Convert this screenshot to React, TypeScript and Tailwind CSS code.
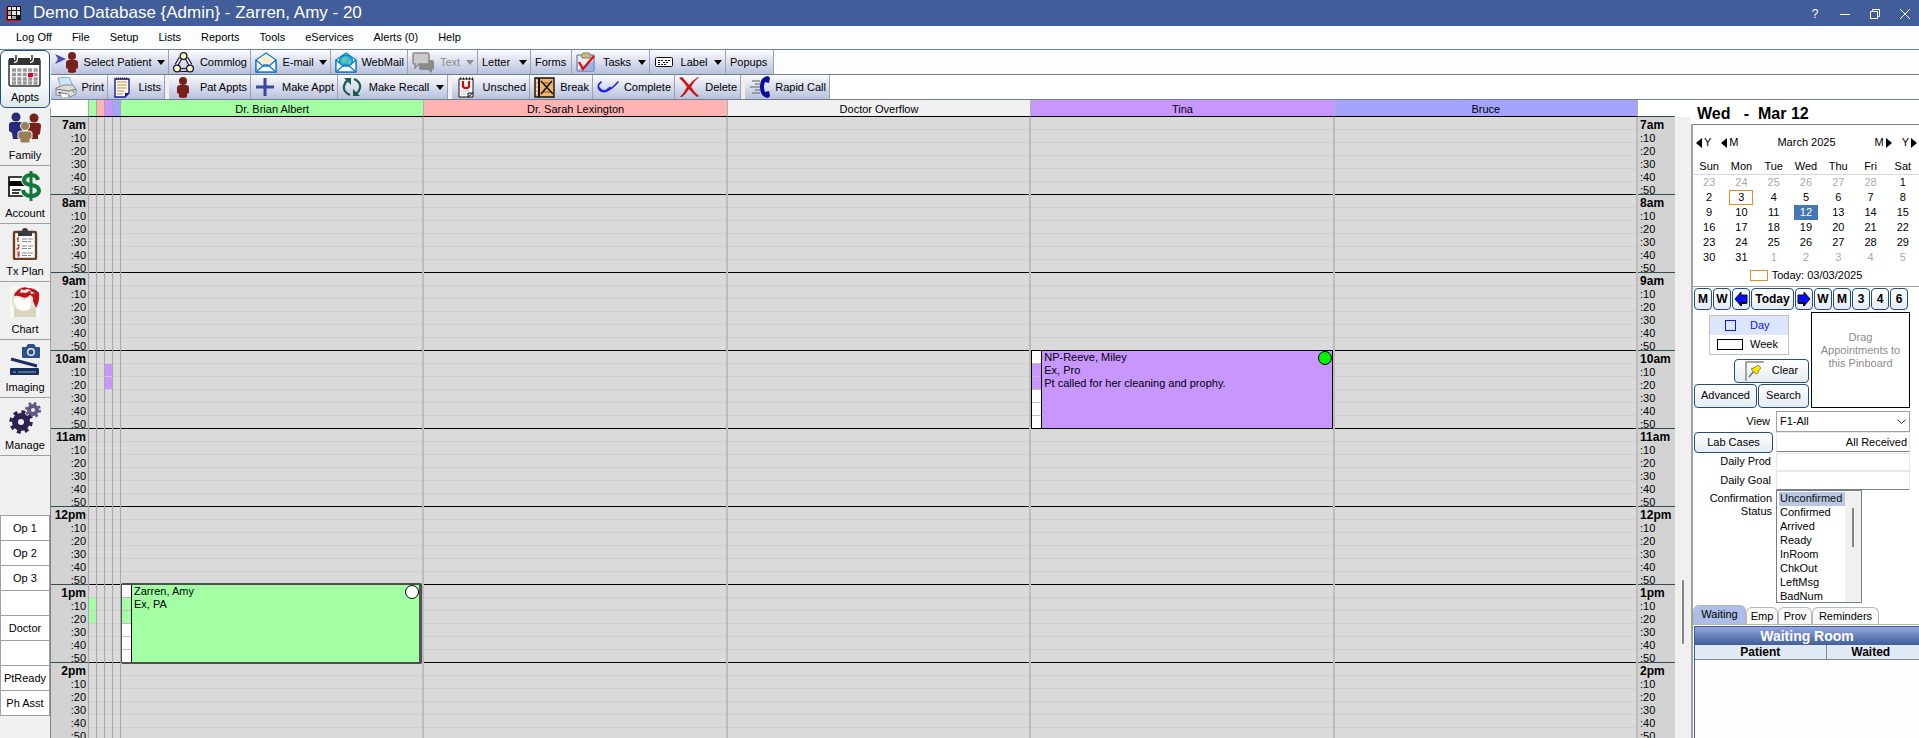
import type { ReactNode } from "react";

const menus = ["Log Off", "File", "Setup", "Lists", "Reports", "Tools", "eServices", "Alerts (0)", "Help"];

const hours = ["7am", "8am", "9am", "10am", "11am", "12pm", "1pm", "2pm"];
const minutes = [":10", ":20", ":30", ":40", ":50"];

const weeks = [
  [23, 24, 25, 26, 27, 28, 1],
  [2, 3, 4, 5, 6, 7, 8],
  [9, 10, 11, 12, 13, 14, 15],
  [16, 17, 18, 19, 20, 21, 22],
  [23, 24, 25, 26, 27, 28, 29],
  [30, 31, 1, 2, 3, 4, 5],
];

const statuses = ["Unconfirmed", "Confirmed", "Arrived", "Ready", "InRoom", "ChkOut", "LeftMsg", "BadNum"];

function PersonIcon() {
  return (
    <svg width="12" height="21" viewBox="0 0 12 21" fill="#78201c">
      <circle cx="6" cy="4" r="4" />
      <path d="M0 11q0-3 3-3h6q3 0 3 3v5l-2 1v3q-4 2-8 0v-3l-2-1z" />
    </svg>
  );
}

function SelectPatientIcon() {
  return (
    <svg width="23" height="21" viewBox="0 0 23 21">
      <path d="M0 2l11 5-11 5 3-5z" fill="#4b4bb0" />
      <circle cx="17" cy="4" r="4" fill="#78201c" />
      <path d="M11 11q0-3 3-3h6q3 0 3 3v5l-2 1v3q-4 2-8 0v-3l-2-1z" fill="#78201c" />
    </svg>
  );
}

function CommlogIcon() {
  return (
    <svg width="21" height="21" viewBox="0 0 21 21" fill="none" stroke="#14143c" strokeWidth="1.3">
      <path d="M7.500 6L3.500 13M13.500 6l4 7M7 18h7" strokeWidth="4" />
      <path d="M7.500 6L3.500 13M13.500 6l4 7M7 18h7" stroke="#fff" strokeWidth="1.600" />
      <circle cx="10.500" cy="4" r="3.400" fill="#ffffb0" />
      <circle cx="4" cy="16.500" r="3.400" fill="#ffffb0" />
      <circle cx="17" cy="16.500" r="3.400" fill="#ffffb0" />
    </svg>
  );
}

function MailIcon({ globe }: { globe?: boolean }) {
  return (
    <svg width="22" height="21" viewBox="0 0 22 21" stroke="#1580cc" strokeWidth="1.400" strokeLinejoin="round">
      <path d="M1 8l10-7 10 7v12H1z" fill="#fff" />
      <path d="M4 8l7-5 7 5v2l-7 5-7-5z" fill="#ffebcb" stroke="none" />
      {globe && <circle cx="11" cy="9.500" r="6.500" fill="#35b6d8" stroke="#1580cc" />}
      {globe && <path d="M7 6l4-1 1 3-3 3-3-2zM13 10l3-2v3l-3 2z" fill="#5fce9c" stroke="none" />}
      <path d="M1 8v12h20V8l-7 6H8z" fill="#fff" />
      <path d="M1 20l8-7h4l8 7" fill="none" />
    </svg>
  );
}

function ChatIcon() {
  return (
    <svg width="22" height="21" viewBox="0 0 22 21">
      <path d="M7 8h13q2 0 2 2v6q0 2-2 2v3l-4-3H9q-2 0-2-2z" fill="#8b8b8b" />
      <path d="M2 1h13q2 0 2 2v7q0 2-2 2H7l-4 4v-4H2q-1 0-1-2V3q0-2 1-2z" fill="#cacaca" stroke="#8b8b8b" strokeWidth="1.500" />
    </svg>
  );
}

function TasksIcon() {
  return (
    <svg width="20" height="20" viewBox="0 0 20 20">
      <path d="M1 3h17v16H1z" fill="#e8eefa" stroke="#5566a8" />
      <path d="M2 18h16V8z" fill="#7f9ae0" opacity=".7" />
      <path d="M5 4l2-3h6l2 3-1 2H6z" fill="#c9bc84" stroke="#8b8050" />
      <path d="M3 10l4 7L18 4" fill="none" stroke="#e01010" strokeWidth="2.400" />
    </svg>
  );
}

function LabelIcon() {
  return (
    <svg width="19" height="11" viewBox="0 0 19 11" fill="none" stroke="#111">
      <rect x=".5" y=".5" width="17" height="9" rx="1" fill="#fff" />
      <path d="M3 3.500h5M10 3.500h5M3 5.500h3M8 5.500h6M3 7.500h9" strokeDasharray="2 1" />
    </svg>
  );
}

function PrintIcon() {
  return (
    <svg width="22" height="21" viewBox="0 0 22 21">
      <path d="M3 1l11-1 4 9-12 2z" fill="#cfe4fa" stroke="#8ba4c4" />
      <path d="M1 11l8-3h9l3 4v5l-6 3-14-2z" fill="#dcdcdc" stroke="#888" />
      <path d="M1 12l13 2 7-2" fill="none" stroke="#777" />
      <path d="M3 15l9 1.500 3 2-8 1z" fill="#222" />
      <path d="M5 16l8 1 1 3-7 1z" fill="#fff" stroke="#999" strokeWidth=".6" />
      <circle cx="18.500" cy="14.500" r="1" fill="#5a5" />
    </svg>
  );
}

function ListsIcon() {
  return (
    <svg width="16" height="21" viewBox="0 0 16 21">
      <path d="M1 2h14v14l-4 4H1z" fill="#fff" stroke="#1818a0" strokeWidth="1.400" />
      <path d="M2 1.500h12" stroke="#222" strokeWidth="2" strokeDasharray="1 1" />
      <path d="M3 5h10M3 8h10M3 11h10M3 14h7M3 17h6" stroke="#d9b16c" strokeWidth="1.400" />
      <path d="M15 16h-4v4z" fill="#1010a0" />
    </svg>
  );
}

function RecallIcon() {
  return (
    <svg width="20" height="20" viewBox="0 0 20 20">
      <path d="M8 18Q1 15 2 9q1-4 4-6" fill="none" stroke="#1d5c4c" strokeWidth="2.200" />
      <path d="M2 1h7v7z" fill="#1d5c4c" />
      <path d="M12 2q7 3 6 9-1 4-4 6" fill="none" stroke="#1d5c4c" strokeWidth="2.200" />
      <path d="M18 19h-7v-7z" fill="#1d5c4c" />
    </svg>
  );
}

function UnschedIcon() {
  return (
    <svg width="16" height="21" viewBox="0 0 16 21">
      <path d="M1 2h14v18H1z" fill="#fff" stroke="#111" />
      <path d="M2 1.500h13" stroke="#111" strokeWidth="2" strokeDasharray="1 2" />
      <path d="M5 4v5q0 2 3 2t3-2V4" fill="none" stroke="#e00000" strokeWidth="2.200" />
      <path d="M3 14h8M3 17h5" stroke="#bbb" />
      <path d="M10 20v-4h5z" fill="#ddd" stroke="#111" />
    </svg>
  );
}

function BreakIcon() {
  return (
    <svg width="21" height="21" viewBox="0 0 21 21" stroke="#111">
      <path d="M1 1h19v19H1z" fill="#eeb46a" strokeWidth="1.400" />
      <path d="M5 1v19" strokeWidth="2" />
      <path d="M2 4h2M2 8h2M2 12h2M2 16h2" stroke="#fff" />
      <path d="M9 6h8M9 15h8" stroke="#8a5b22" />
      <path d="M7 4l12 13M18 4L7 17" strokeWidth="1.500" />
    </svg>
  );
}

function CompleteIcon() {
  return (
    <svg width="22" height="12" viewBox="0 0 22 12" fill="none" stroke="#2424f4" strokeLinecap="round">
      <path d="M4 1Q0 4 2 8q2 3 7 2Q14 9 21 1" strokeWidth="1.600" />
      <path d="M2 7q2 4 7 3l4-3" strokeWidth="2.400" />
    </svg>
  );
}

function DeleteIcon() {
  return (
    <svg width="20" height="20" viewBox="0 0 20 20" fill="#cc1212">
      <path d="M0 1l3-1q4 4 7 8 4-5 9-8h1q-5 4-8 10 3 5 8 9l-2 1q-5-4-8-8-3 5-7 8H1q4-4 7-10Q5 5 0 1z" />
    </svg>
  );
}

function RapidIcon() {
  return (
    <svg width="21" height="22" viewBox="0 0 21 22">
      <path d="M3 5h8M6 8h5M1 11h10M6 14h5M3 17h8" stroke="#888" strokeWidth="1.300" />
      <path d="M19 0q-8 1-8 11t8 11l2-2-1-5-4 1q-2-5 0-10l4 1 1-5z" fill="#0b0ba0" />
    </svg>
  );
}

function Caret() {
  return (
    <svg width="8" height="5" viewBox="0 0 8 5" fill="currentColor">
      <path d="M0 0h8L4 5z" />
    </svg>
  );
}

type ToolProps = { label: string; width: string; icon?: ReactNode; caret?: boolean; disabled?: boolean };

function ToolButton({ label, width, icon, caret, disabled }: ToolProps) {
  return (
    <button
      disabled={disabled}
      className={`flex shrink-0 items-center justify-between border-r border-[#a0a0a8] bg-linear-to-b from-[#fcfcff] to-[#b8c1dd] pr-[3px] pl-1 whitespace-nowrap disabled:text-[#8c8c8c] ${width}`}
    >
      {icon && <span className="flex min-w-5 justify-center">{icon}</span>}
      <span>{label}</span>
      {caret && <Caret />}
    </button>
  );
}

function Toolbars() {
  return (
    <>
      <div className="flex h-[25px] border-b border-[#708090] bg-[#fcfdfe]">
        <ToolButton label="Select Patient" width="w-[118px]" icon={<SelectPatientIcon />} caret />
        <ToolButton label="Commlog" width="w-[82px]" icon={<CommlogIcon />} />
        <ToolButton label="E-mail" width="w-20" icon={<MailIcon />} caret />
        <ToolButton label="WebMail" width="w-[77px]" icon={<MailIcon globe />} />
        <ToolButton label="Text" width="w-[70px]" icon={<ChatIcon />} caret disabled />
        <ToolButton label="Letter" width="w-[53px]" caret />
        <ToolButton label="Forms" width="w-[41px]" />
        <ToolButton label="Tasks" width="w-[78px]" icon={<TasksIcon />} caret />
        <ToolButton label="Label" width="w-[76px]" icon={<LabelIcon />} caret />
        <ToolButton label="Popups" width="w-12" />
      </div>
      <div className="flex h-[25px] border-b border-[#708090] bg-white">
        <ToolButton label="Print" width="w-[57px]" icon={<PrintIcon />} />
        <ToolButton label="Lists" width="w-[57px]" icon={<ListsIcon />} />
        <span className="w-1 bg-[#f0f0f0]" />
        <ToolButton label="Pat Appts" width="w-[82px]" icon={<PersonIcon />} />
        <ToolButton
          label="Make Appt"
          width="w-[87px]"
          icon={
            <svg width="18" height="18" viewBox="0 0 18 18" stroke="#3a459c" strokeWidth="3">
              <path d="M9 0v18M0 9h18" />
            </svg>
          }
        />
        <ToolButton label="Make Recall" width="w-[110px]" icon={<RecallIcon />} caret />
        <span className="w-1 bg-[#f0f0f0]" />
        <ToolButton label="Unsched" width="w-[78px]" icon={<UnschedIcon />} />
        <ToolButton label="Break" width="w-[63px]" icon={<BreakIcon />} />
        <ToolButton label="Complete" width="w-[82px]" icon={<CompleteIcon />} />
        <ToolButton label="Delete" width="w-[66px]" icon={<DeleteIcon />} />
        <span className="w-1 bg-[#f0f0f0]" />
        <ToolButton label="Rapid Call" width="w-[85px]" icon={<RapidIcon />} />
      </div>
    </>
  );
}

function ApptsIcon() {
  return (
    <svg width="34" height="32" viewBox="0 0 34 32">
      <rect x="1" y="4" width="31" height="27" rx="2" fill="#fff" stroke="#333" strokeWidth="1.500" />
      <path d="M1 3h31v7H1z" fill="#333" />
      <path d="M8 0v4q0 2-2 2M24 0v4q0 2-2 2" fill="none" stroke="#fff" strokeWidth="4" />
      <path d="M8 0v4q0 2-2 2M24 0v4q0 2-2 2" fill="none" stroke="#333" strokeWidth="1.500" />
      <path d="M4 15h26M4 19.500h26M4 24h26M4 28h26" stroke="#999" strokeWidth="3.400" strokeDasharray="4 1.400" />
      <path d="M20 18h5v4h-5z" fill="#d8002c" />
    </svg>
  );
}

function FamilyIcon() {
  return (
    <svg width="32" height="32" viewBox="0 0 32 32">
      <circle cx="7" cy="5" r="4.500" fill="#272a78" />
      <path d="M0 13q0-3 3-3h8q3 0 3 3l-2 14H4l-1-6-3-2z" fill="#272a78" />
      <circle cx="25" cy="6" r="4.500" fill="#78201c" />
      <path d="M18 14q0-3 3-3h8q3 0 3 3l-1 8-2 1v4h-8z" fill="#78201c" />
      <circle cx="16" cy="14" r="4.500" fill="#978154" stroke="#f0f0f0" />
      <path d="M9 21q0-2 3-2h8q3 0 3 2v5l-2 1v4H11v-4l-2-1z" fill="#978154" stroke="#f0f0f0" />
    </svg>
  );
}

function AccountIcon() {
  return (
    <svg width="34" height="32" viewBox="0 0 34 32">
      <path d="M1 7h20v19H1z" fill="#fff" stroke="#000" strokeWidth="1.600" />
      <path d="M1 11h20v5H1z" />
      <path d="M4 20h9M4 23h7" stroke="#000" strokeWidth="1.500" />
      <g fill="none">
        <path d="M30 10q-1-5-7-5t-7 5q0 4 7 5 8 1 8 6-1 5-8 5-7 0-8-6M23 1v30" stroke="#f0f0f0" strokeWidth="6" />
        <path d="M30 10q-1-5-7-5t-7 5q0 4 7 5 8 1 8 6-1 5-8 5-7 0-8-6" stroke="#13763a" strokeWidth="4" />
        <path d="M23 1v30" stroke="#13763a" strokeWidth="3" />
      </g>
    </svg>
  );
}

function TxPlanIcon() {
  return (
    <svg width="26" height="32" viewBox="0 0 26 32">
      <rect x="2" y="4" width="22" height="27" rx="1" fill="#fff" stroke="#68402a" strokeWidth="2.400" />
      <path d="M6 3h4q0-3 3-3t3 3h4v5H6z" fill="#3a3a3a" />
      <path d="M10 11h12M10 13.500h9M10 18h12M10 20.500h9M10 25h12M10 27.500h9" stroke="#888" strokeDasharray="5 1" />
      <path d="M5 11l1-1v4M5 17h2v2l-2 2h2M5 24h2v4H5M5 26h2" fill="none" stroke="#d81818" strokeWidth="1.200" />
    </svg>
  );
}

function ToothIcon() {
  return (
    <svg width="30" height="31" viewBox="0 0 30 31">
      <path d="M0 0h30v31H0z" fill="#f8f8f8" />
      <path d="M3 8Q0 16 4 22v9h22v-9q4-8 3-15-4-4-9-5-4 1-7-1-7 1-10 7z" fill="#e4e1d6" />
      <path d="M8 4q5-4 10-2 7 0 11 5 1 8-3 15l-3-7q1-5-3-6-4 4-8 2-5-2-8-1 1-4 4-6z" fill="#c0121a" />
      <path d="M11 3q3 2 6 0l4 1-5 3q-4-1-6 0zM20 5l5 2-4 1z" fill="#f4eeee" />
      <path d="M4 12q4-2 7 1 4 3 8-1 3 1 2 6-1 5-4 7-5 2-9-2-4-4-4-11z" fill="#fdfdfb" />
      <path d="M4 22q10 6 22-1v10H4z" fill="#dcd5bd" />
    </svg>
  );
}

function ImagingIcon() {
  return (
    <svg width="32" height="32" viewBox="0 0 32 32">
      <path d="M13 3h4l2-3h6l2 3h3q1 0 1 1v9q0 1-1 1H14q-1 0-1-1z" fill="#2e5188" />
      <circle cx="22" cy="8" r="4" fill="#f0f0f0" />
      <circle cx="22" cy="8" r="2.600" fill="#2e5188" />
      <path d="M2 15l26 7" stroke="#16305f" strokeWidth="3" />
      <rect x="1" y="24" width="29" height="7" rx="1" fill="#16305f" />
      <path d="M4 28h3M9 28h18" stroke="#8fa6cc" strokeWidth="1.200" />
    </svg>
  );
}

function ManageIcon() {
  return (
    <svg width="32" height="32" viewBox="0 0 32 32" fill="none">
      <circle cx="24" cy="8" r="4" stroke="#605a88" strokeWidth="4" />
      <circle cx="24" cy="8" r="6.500" stroke="#605a88" strokeWidth="3" strokeDasharray="2.550 2.550" />
      <circle cx="12" cy="20" r="6" stroke="#30204f" strokeWidth="6" />
      <circle cx="12" cy="20" r="10" stroke="#30204f" strokeWidth="3.500" strokeDasharray="3.930 3.930" />
    </svg>
  );
}

const modules = [
  { label: "Family", icon: <FamilyIcon /> },
  { label: "Account", icon: <AccountIcon /> },
  { label: "Tx Plan", icon: <TxPlanIcon /> },
  { label: "Chart", icon: <ToothIcon /> },
  { label: "Imaging", icon: <ImagingIcon /> },
  { label: "Manage", icon: <ManageIcon /> },
];

function Sidebar() {
  return (
    <nav className="flex w-[51px] shrink-0 flex-col bg-[#f0f0f0]">
      <button className="flex h-[58px] w-[50px] flex-col items-center justify-between rounded-md border border-[#1f4f82] bg-linear-to-b from-white via-white to-[#dfe8ee] pt-1 pb-0.5">
        <ApptsIcon />
        <span className="leading-4">Appts</span>
      </button>
      {modules.map((m) => (
        <button
          key={m.label}
          className="flex h-[58px] flex-col items-center justify-between border-r border-b border-[#a0a0a0] pt-1 pb-0.5"
        >
          {m.icon}
          <span className="leading-4">{m.label}</span>
        </button>
      ))}
      <div className="flex flex-1 flex-col border-r border-[#808080] pt-[59px]">
        {["Op 1", "Op 2", "Op 3", "", "Doctor", "", "PtReady", "Ph Asst"].map((name, i) => (
          <div
            key={i}
            className="flex h-[25px] items-center justify-center border border-b-0 border-[#a0a0a0] bg-white last:h-[26px] last:border-b"
          >
            {name}
          </div>
        ))}
      </div>
    </nav>
  );
}

function TimeColumn({ side }: { side: "left" | "right" }) {
  return (
    <div className="w-[37px] shrink-0 bg-[#d3d3d3] leading-[13px]">
      {hours.map((h) => (
        <div key={h} className={`h-[78px] border-b border-[#2f4f4f] px-0.5 pt-px ${side === "left" ? "text-right" : "text-left"}`}>
          <div className="text-xs leading-[14px] font-bold">{h}</div>
          {minutes.map((m) => (
            <div key={m}>{m}</div>
          ))}
        </div>
      ))}
    </div>
  );
}

// slots are ten minute steps counted from 7am
function Slots({ filled = [], fill = "" }: { filled?: number[]; fill?: string }) {
  return (
    <>
      {hours.map((h, i) => (
        <div key={h} className="h-[78px] border-b border-black">
          {[0, 1, 2, 3, 4, 5].map((s) => (
            <div
              key={s}
              className={`h-[13px] ${s < 5 ? "border-b border-[#cfcfcf]" : ""} ${filled.includes(i * 6 + s) ? fill : ""}`}
            />
          ))}
        </div>
      ))}
    </>
  );
}

type ApptProps = { lines: string[]; place: string; fill: string; dot: string };

function Appointment({ lines, place, fill, dot }: ApptProps) {
  return (
    <div className={`absolute flex overflow-hidden ${place} ${fill}`}>
      <div className="w-[10px] border-r border-black bg-white">
        {[0, 1, 2, 3, 4, 5].map((s) => (
          <div key={s} className={`h-[13px] border-b border-[#c0c0c0] ${s === 1 || s === 2 ? fill : ""}`} />
        ))}
      </div>
      <div className="flex-1 pl-0.5 leading-[13px]">
        {lines.map((l) => (
          <p key={l}>{l}</p>
        ))}
      </div>
      <span className={`size-[14px] rounded-full border border-black ${dot}`} />
    </div>
  );
}

const operatories = [
  { name: "Dr. Brian Albert", color: "bg-[#a4ffa4]" },
  { name: "Dr. Sarah Lexington", color: "bg-[#ffb4b4]" },
  { name: "Doctor Overflow", color: "bg-[#f0f0f0]" },
  { name: "Tina", color: "bg-[#c896ff]" },
  { name: "Bruce", color: "bg-[#a4a4ff]" },
];

const providers = [
  { color: "bg-[#a4ffa4]", filled: [37, 38] },
  { color: "bg-[#ffb4b4]", filled: [] },
  { color: "bg-[#c896ff]", filled: [19, 20] },
  { color: "bg-[#a4a4ff]", filled: [] },
];

function Schedule() {
  return (
    <section className="flex min-w-0 flex-1 flex-col">
      <div className="flex h-[17px] shrink-0 bg-white">
        <div className="w-[37px] border-b border-[#2f4f4f]" />
        <div className="flex border-b border-l border-b-black border-l-[#a9a9a9]">
          {providers.map((p) => (
            <div key={p.color} className={`w-2 border-r border-[#a9a9a9] ${p.color}`} />
          ))}
        </div>
        {operatories.map((o) => (
          <div key={o.name} className={`flex-1 border-r border-b border-r-[#b0b0b0] border-b-black pt-px text-center leading-4 ${o.color}`}>
            {o.name}
          </div>
        ))}
        <div className="mr-4 w-[37px] border-b border-[#2f4f4f]" />
      </div>
      <div className="flex min-h-0 flex-1 overflow-hidden bg-[#dadada]">
        <TimeColumn side="left" />
        <div className="flex border-l border-[#a9a9a9]">
          {providers.map((p) => (
            <div key={p.color} className="w-2 border-r border-[#a9a9a9]">
              <Slots filled={p.filled} fill={p.color} />
            </div>
          ))}
        </div>
        {operatories.map((o) => (
          <div key={o.name} className="relative flex-1 border-r-2 border-[#bcbcbc]">
            <Slots />
            {o.name === "Dr. Brian Albert" && (
              <Appointment
                lines={["Zarren, Amy", "Ex, PA"]}
                place="top-[466px] right-0 left-0 h-[81px] rounded-xs border-2 border-r-3 border-l-1 border-[#505050]"
                fill="bg-[#a4ffa4]"
                dot="bg-white"
              />
            )}
            {o.name === "Tina" && (
              <Appointment
                lines={["NP-Reeve, Miley", "Ex, Pro", "Pt called for her cleaning and prophy."]}
                place="top-[233px] right-0 left-0 h-[79px] border border-black"
                fill="bg-[#c896ff]"
                dot="bg-[#00f400]"
              />
            )}
          </div>
        ))}
        <TimeColumn side="right" />
        <div className="flex w-4 shrink-0 items-center justify-center bg-[#f0f0f0] pt-[368px]">
          <div className="h-16 w-0.5 rounded bg-[#858585]" />
        </div>
      </div>
    </section>
  );
}

function NavArrow({ flip }: { flip?: boolean }) {
  return (
    <svg width="6" height="10" viewBox="0 0 6 10">
      <path d={flip ? "M0 0l6 5-6 5z" : "M6 0L0 5l6 5z"} />
    </svg>
  );
}

function Calendar() {
  return (
    <div className="flex flex-col border-y border-t-[#808080] border-b-[#a0a0a0] bg-white">
      <div className="flex h-[35px] items-center justify-between pr-0.5 pl-[3px]">
        <div className="flex gap-2.5">
          <button className="flex items-center gap-0.5"><NavArrow />Y</button>
          <button className="flex items-center gap-0.5"><NavArrow />M</button>
        </div>
        <span>March 2025</span>
        <div className="flex gap-2.5">
          <button className="flex items-center gap-0.5">M<NavArrow flip /></button>
          <button className="flex items-center gap-0.5">Y<NavArrow flip /></button>
        </div>
      </div>
      <table className="w-full table-fixed text-center">
        <thead>
          <tr className="border-b border-[#d8d8d8]">
            {["Sun", "Mon", "Tue", "Wed", "Thu", "Fri", "Sat"].map((d) => (
              <th key={d} className="h-[14px] p-0 leading-[13px] font-normal">{d}</th>
            ))}
          </tr>
        </thead>
        <tbody>
          {weeks.map((week, i) => (
            <tr key={i}>
              {week.map((d) => {
                const other = (i === 0 && d > 7) || (i === 5 && d < 7);
                let look = "border-transparent";
                if (other) look = "border-transparent text-[#a9a9a9]";
                if (i === 1 && d === 3) look = "border-[#f08a1c]";
                if (i === 2 && d === 12) look = "border-[#4678b4] bg-[#4678b4] text-white";
                return (
                  <td key={d} className="h-[15px] p-0">
                    <button className={`mx-auto block h-[15px] w-6 border leading-[13px] ${look}`}>{d}</button>
                  </td>
                );
              })}
            </tr>
          ))}
        </tbody>
      </table>
      <div className="flex h-[21px] items-center justify-center gap-1">
        <span className="h-[11px] w-[18px] border border-[#f08a1c]" />
        Today: 03/03/2025
      </div>
    </div>
  );
}

const blueButton =
  "flex items-center justify-center rounded border border-[#1f4f82] bg-linear-to-b from-white to-[#e4ecf2]";

function BlueArrow({ flip }: { flip?: boolean }) {
  return (
    <svg width="14" height="16" viewBox="0 0 14 16" stroke="#111" fill="#0a0aff">
      <path d={flip ? "M13 8L7 1v3H1v8h6v3z" : "M1 8l6-7v3h6v8H7v3z"} />
      <path d={flip ? "M1 12h6v3" : "M7 15v-3h6"} strokeWidth="2" fill="none" />
    </svg>
  );
}

function PinIcon() {
  return (
    <svg width="19" height="20" viewBox="0 0 19 20">
      <path d="M1 20V1h18" fill="none" stroke="#888" strokeWidth="1.500" />
      <path d="M4 16l6-7" stroke="#666" strokeWidth="1.300" />
      <path d="M6 8l3-1 3-2 1-1 3 3-2 2-1 3-2 1z" fill="#ffe600" stroke="#8a7500" strokeWidth=".8" />
    </svg>
  );
}

function JumpButtons() {
  return (
    <div className="flex h-[22px] gap-px text-xs font-bold">
      <button className={`w-[18px] ${blueButton}`}>M</button>
      <button className={`w-[18px] ${blueButton}`}>W</button>
      <button aria-label="Previous day" className={`w-[18px] ${blueButton}`}><BlueArrow /></button>
      <button className={`w-[43px] ${blueButton}`}>Today</button>
      <button aria-label="Next day" className={`w-[18px] ${blueButton}`}><BlueArrow flip /></button>
      <button className={`w-[18px] ${blueButton}`}>W</button>
      <button className={`w-[18px] ${blueButton}`}>M</button>
      <button className={`w-[18px] ${blueButton}`}>3</button>
      <button className={`w-[18px] ${blueButton}`}>4</button>
      <button className={`w-[18px] ${blueButton}`}>6</button>
    </div>
  );
}

function WaitingRoom() {
  return (
    <div className="mt-0.5 flex min-h-0 flex-1 flex-col">
      <div className="flex h-5 items-end border-b border-[#b4b4b4]">
        <button className="h-[19px] w-[53px] rounded-t-md border border-b-0 border-[#b8b8b8] bg-[#acbde6]">Waiting</button>
        <button className="h-[17px] w-8 rounded-t-md border border-b-0 border-[#b8b8b8] bg-[#f8f8f8]">Emp</button>
        <button className="h-[17px] w-[34px] rounded-t-md border border-b-0 border-[#b8b8b8] bg-[#f8f8f8]">Prov</button>
        <button className="h-[17px] w-[67px] rounded-t-md border border-b-0 border-[#b8b8b8] bg-[#f8f8f8]">Reminders</button>
      </div>
      <div className="mt-px ml-px flex flex-1 flex-col border-t border-l border-[#415d9a] bg-[#fcfdfe]">
        <h2 className="h-[18px] bg-linear-to-b from-[#93a8de] to-[#415d9a] text-center text-sm leading-[19px] font-bold text-white">
          Waiting Room
        </h2>
        <table className="w-full table-fixed text-xs">
          <thead>
            <tr className="h-[15px] border-b border-[#808890] bg-[#e0eaf4] leading-[14px]">
              <th className="w-[131px] border-r border-[#808890] p-0">Patient</th>
              <th className="p-0 pr-1">Waited</th>
            </tr>
          </thead>
        </table>
      </div>
    </div>
  );
}

function RightPanel() {
  return (
    <aside className="flex w-[228px] shrink-0 flex-col bg-white">
      <h1 className="h-6 pt-0.5 pl-[6px] text-base leading-6 font-bold whitespace-pre">Wed   -  Mar 12</h1>
      <div className="flex min-h-0 flex-1 flex-col border-l-2 border-[#a0a0a0]">
        <Calendar />
        <div className="pt-px pr-[9px] pl-px">
          <JumpButtons />
          <div className="mt-0.5 flex justify-between">
            <div className="flex flex-col items-end justify-end gap-px">
              <div className="mr-5 mb-[3px] flex w-20 flex-col border border-[#c0c0c0]">
                <button className="flex h-[19px] items-center bg-[#dce6ff] text-[#1414f0]">
                  <span className="flex w-10 justify-center"><i className="size-[11px] border border-current" /></span>
                  Day
                </button>
                <button className="flex h-[19px] items-center">
                  <span className="flex w-10 justify-center"><i className="h-[11px] w-[26px] border border-current" /></span>
                  Week
                </button>
              </div>
              <button className={`h-6 w-[75px] gap-2 ${blueButton}`}>
                <PinIcon />
                Clear
              </button>
              <div className="flex gap-px">
                <button className={`h-6 w-[63px] ${blueButton}`}>Advanced</button>
                <button className={`h-6 w-[51px] ${blueButton}`}>Search</button>
              </div>
            </div>
            <div className="h-24 w-[99px] border border-black px-1 pt-[18px] text-center leading-[13px] text-[#8c8c8c]">
              Drag Appointments to this Pinboard
            </div>
          </div>
          <div className="mt-[3px] grid grid-cols-[79px_1fr] gap-x-[3px]">
            <label htmlFor="view" className="self-center pr-[3px] text-right">View</label>
            <div className="relative">
              <select id="view" className="block h-[21px] w-full appearance-none border border-[#a0a0a0] bg-white pl-[3px]">
                <option>F1-All</option>
              </select>
              <svg className="pointer-events-none absolute top-2 right-1" width="9" height="5" viewBox="0 0 9 5" fill="none" stroke="#333">
                <path d="M0.500 0.500l4 4 4-4" />
              </svg>
            </div>
            <button className={`h-[21px] ${blueButton}`}>Lab Cases</button>
            <input
              aria-label="Lab Cases"
              readOnly
              value="All Received"
              className="h-5 w-full min-w-0 border border-[#e8e8e8] border-b-[#808080] pr-0.5 text-right"
            />
            <label htmlFor="prod" className="self-center pr-0.5 text-right">Daily Prod</label>
            <input id="prod" className="h-[18px] w-full min-w-0 border border-[#e8e8e8]" />
            <label htmlFor="goal" className="self-center pr-0.5 text-right">Daily Goal</label>
            <input id="goal" className="h-[19px] w-full min-w-0 border border-[#e8e8e8] border-b-[#808080]" />
            <label htmlFor="status" className="pt-0.5 pr-px text-right leading-[13px]">Confirmation Status</label>
            <div className="flex h-[113px] w-[86px] overflow-hidden border border-[#708090] bg-white pt-px">
              <select
                id="status"
                size={8}
                defaultValue="Unconfirmed"
                className="h-[112px] flex-1 overflow-hidden pl-0.5 [scrollbar-width:none]"
              >
                {statuses.map((s) => (
                  <option key={s} className="h-[14px] min-h-0 p-0 pl-px leading-[14px] checked:bg-linear-to-r checked:from-[#b9c7e2] checked:to-[#b9c7e2]">
                    {s}
                  </option>
                ))}
              </select>
              <div className="flex w-4 justify-center bg-[#f0f0f0] pt-4">
                <div className="h-[39px] w-0.5 bg-[#858585]" />
              </div>
            </div>
          </div>
        </div>
        <WaitingRoom />
      </div>
    </aside>
  );
}

export default function App() {
  return (
    <div className="flex h-screen flex-col overflow-hidden bg-white font-['Liberation_Sans',sans-serif] text-[11px] text-black">
      <header className="flex h-[26px] shrink-0 items-center bg-[#415d9a] pl-1.5 text-white">
        <svg width="15" height="15" viewBox="0 0 15 15">
          <path d="M0 1h14v14H0z" fill="#e00" />
          <path d="M1 0h14v14H1z" fill="#111" />
          <path d="M2 1h3v3H2zM6 1h4v3H6zM11 5h3v4h-3zM6 5h4v4H6zM2 10h3v3H2zM11 1h3v3h-3z" fill="#e4e4e4" />
          <path d="M2 5h3v4H2zM6 10h4v3H6z" fill="#aaa" />
        </svg>
        <span className="ml-3 text-[17px]">Demo Database {"{Admin}"} - Zarren, Amy - 20</span>
        <div className="ml-auto flex gap-[10px] pt-px pr-1">
          <button className="w-5 text-xs">?</button>
          <button aria-label="Minimize" className="flex w-5 items-center justify-center">
            <svg width="10" height="10" stroke="#fff"><path d="M0 5.500h10" /></svg>
          </button>
          <button aria-label="Restore" className="flex w-5 items-center justify-center">
            <svg width="10" height="10" stroke="#fff" fill="none"><path d="M.5 2.500h7v7h-7zM2.500 2.500v-2h7v7h-2" /></svg>
          </button>
          <button aria-label="Close" className="flex w-5 items-center justify-center">
            <svg width="10" height="10" stroke="#fff"><path d="M0 0l10 10M10 0L0 10" /></svg>
          </button>
        </div>
      </header>
      <div className="flex h-6 shrink-0 items-center gap-5 border-b border-[#708090] bg-[#fcfdfe] pl-4">
        {menus.map((m) => (
          <button key={m}>{m}</button>
        ))}
      </div>
      <div className="flex min-h-0 flex-1">
        <Sidebar />
        <main className="flex min-w-0 flex-1 flex-col">
          <Toolbars />
          <div className="flex min-h-0 flex-1">
            <Schedule />
            <RightPanel />
          </div>
        </main>
      </div>
    </div>
  );
}
